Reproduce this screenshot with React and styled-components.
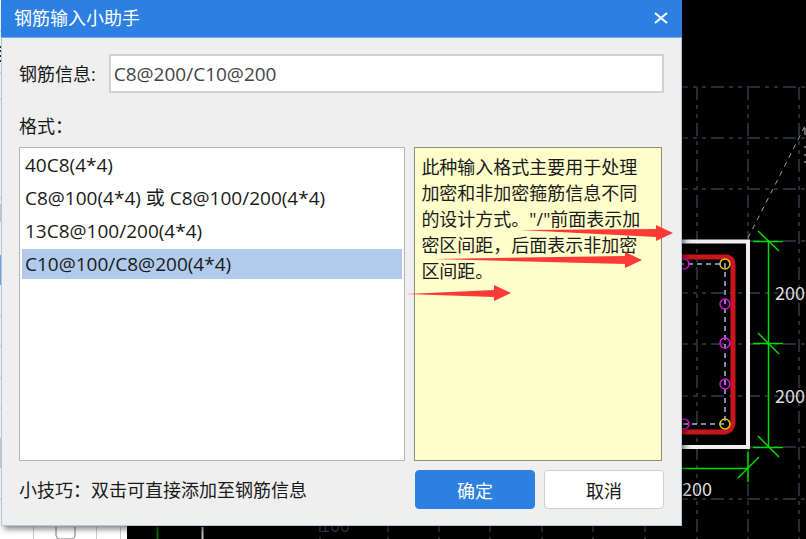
import React, { useState } from 'react';
import styled, { createGlobalStyle } from 'styled-components';

const GlobalStyle = createGlobalStyle`
  * {
    box-sizing: border-box;
  }
  body {
    margin: 0;
    background-color: #000;
    font-family: "Open Sans", "Noto Sans CJK SC", sans-serif;
    font-size: 18px;
    color: #1a1a1a;
  }
  button,
  input {
    font: inherit;
  }
`;

const Workspace = styled.main`
  position: relative;
  min-height: 100vh;
  overflow: hidden;
`;
const Layer = styled.svg`
  position: absolute;
  top: 0;
  left: 0;
  width: 806px;
  height: 539px;
  pointer-events: none;
`;
const Dialog = styled.section`
  position: relative;
  margin: 0 124px 12px 1px;
  background-color: #efefef;
  border: 1px solid #b9c6d8;
  border-top: none;
  box-shadow: 3px 3px 6px rgba(0, 0, 0, 0.5);
`;
const TitleBar = styled.header`
  display: flex;
  align-items: center;
  justify-content: space-between;
  height: 38px;
  margin: 0 -1px;
  padding: 0 12px 2px 13px;
  background-color: #2d7fe1;
  border-bottom: 1px solid #72aef4;
  color: #fff;
`;
const Title = styled.h1`
  margin: 0;
  font-size: 18px;
  font-weight: 400;
  line-height: 24px;
`;
const CloseButton = styled.button`
  display: flex;
  padding: 2px;
  background: none;
  border: none;
  color: #fff;
`;
const Form = styled.form`
  padding: 16px 17px;
`;
const Field = styled.div`
  display: flex;
  align-items: center;
  gap: 13px;
`;
const Label = styled.label`
  line-height: 24px;
`;
const TextInput = styled.input`
  flex: 1;
  min-width: 0;
  height: 39px;
  padding: 0 3px;
  background-color: #fff;
  border: 2px solid #ced1d5;
  color: #444;
  font-size: 19px;
  outline: none;
`;
const FormatTitle = styled.h2`
  margin: 21px 0 9px;
  font-size: 18px;
  font-weight: 400;
  line-height: 24px;
`;
const Columns = styled.div`
  display: grid;
  grid-template-columns: 387fr 248fr;
  gap: 9px;
  margin-right: 2px;
`;
const FormatList = styled.div`
  display: flex;
  flex-direction: column;
  gap: 3px;
  min-height: 314px;
  padding: 2px;
  background-color: #fff;
  border: 1px solid #b4b4b4;
`;
const FormatItem = styled.button`
  height: 30px;
  padding: 0 3px;
  background-color: ${props => (props.$selected ? '#b1cbec' : 'transparent')};
  border: none;
  color: #1a1a1a;
  font-size: 19px;
  text-align: left;
  line-height: 30px;
`;
const Hint = styled.p`
  margin: 0;
  padding: 6px 16px 6px 6px;
  background-color: #ffffcc;
  border: 1px solid #8c8c80;
  line-height: 26px;
`;
const Footer = styled.footer`
  display: flex;
  align-items: center;
  gap: 9px;
  margin-top: 9px;
`;
const Tip = styled.p`
  flex: 1;
  margin: 0;
  line-height: 24px;
`;
const Button = styled.button`
  width: 120px;
  height: 39px;
  background-color: ${props => (props.$primary ? '#2d7fe1' : '#fff')};
  border: 1px solid ${props => (props.$primary ? '#2d7fe1' : '#cfcfcf')};
  border-radius: 4px;
  color: ${props => (props.$primary ? '#fff' : '#1a1a1a')};
`;

const FORMATS = [
  '40C8(4*4)',
  'C8@100(4*4) 或 C8@100/200(4*4)',
  '13C8@100/200(4*4)',
  'C10@100/C8@200(4*4)',
];

const GRID_X = [320, 388, 439, 490, 542, 593, 645, 697, 748, 799];
const GRID_Y = [87, 138, 189, 241, 293, 344, 396, 447, 499];
const BARS = [
  [684, 264],
  [725, 304],
  [725, 343],
  [725, 384],
  [684, 424],
];
const CORNER_BARS = [
  [725, 264],
  [725, 424],
];

const Drawing = () => (
  <Layer viewBox="0 0 806 539" aria-hidden="true">
    <g stroke="#272d37" strokeWidth="2" strokeDasharray="13 5 4 5 4 5">
      {GRID_X.map(x => (
        <path key={x} d={`M${x} 87V539`} />
      ))}
      {GRID_Y.map(y => (
        <path key={y} d={`M639 ${y}H806`} />
      ))}
    </g>
    <path d="M748 238L806 124" stroke="#a0a0a0" strokeDasharray="5 5" />
    <g fill="none">
      <path d="M670 241.500H748V447H670" stroke="#f2eeee" strokeWidth="4" />
      <path
        d="M670 257H727Q733 258 733 265V423Q732 431 725 432H670"
        stroke="#c9161c"
        strokeWidth="5"
      />
      <path
        d="M670 264H725V424H670"
        stroke="#9dbbdc"
        strokeWidth="1.500"
        strokeDasharray="5 4"
      />
      <g stroke="#e808e8" strokeWidth="1.500">
        {BARS.map(([x, y]) => (
          <circle key={`${x}-${y}`} cx={x} cy={y} r="5" />
        ))}
      </g>
      <g stroke="#e8c81c" strokeWidth="1.500">
        {CORNER_BARS.map(([x, y]) => (
          <circle key={`${x}-${y}`} cx={x} cy={y} r="5" />
        ))}
      </g>
      <g stroke="#00dc00" strokeWidth="1.500">
        <path d="M768.500 241V447M753 241.500H783M753 343.500H783M753 447.500H783" />
        <path d="M758 231L779 251M758 333L779 354M758 436L779 457" />
        <path d="M680 468.500H748M748 452V482M738 478L759 457" />
      </g>
    </g>
    <g fill="#dedede" fontFamily="Noto Sans CJK SC, sans-serif" fontSize="18">
      <text x="775" y="300">200</text>
      <text x="775" y="403">200</text>
      <text x="682" y="496">200</text>
      <text x="320" y="532" fill="#343b45">100</text>
    </g>
    <path d="M805 128V135M804 147H806M804 155H806M804 162H806" stroke="#ccc" />
    <path d="M0 0H127V539H0Z" fill="#fff" />
    <path
      d="M0 31H2M0 73H2M0 99H2M0 198H2M0 316H2M0 346H2M0 378H2M0 408H2M0 499H2"
      stroke="#c9ccd4"
    />
    <path d="M0 204H2V222H0ZM0 438H2V468H0Z" fill="#d0d0d4" />
    <path d="M0 255H2V285H0Z" fill="#6fb0fa" />
    <path d="M0 47H1M0 51H1M0 56H1M0 61H1" stroke="#333" strokeWidth="2" />
    <path d="M33.500 527V539M96.500 527V539M120.500 527V539" stroke="#ccc" />
    <path d="M56 527V536L58 539H73L75 536V527" fill="none" stroke="#777" />
    <path d="M157.500 527V539" stroke="#006c00" strokeWidth="2" />
    <path d="M202.500 527V539" stroke="#b8bccb" strokeWidth="2" />
  </Layer>
);

const Arrows = () => (
  <Layer viewBox="0 0 806 539" aria-hidden="true">
    <g fill="#fc3a36">
      <path d="M520 230L656 229V225L673 233L656 241V237Z" />
      <path d="M433 259L625 256V252L642 260L625 268V264Z" />
      <path d="M406 294L494 290V285L511 293L494 301V297Z" />
    </g>
  </Layer>
);

const App = () => {
  const [value, setValue] = useState('C8@200/C10@200');
  const [selected, setSelected] = useState(3);

  return (
    <Workspace>
      <GlobalStyle />
      <Drawing />
      <Dialog role="dialog" aria-labelledby="dialog-title">
        <TitleBar>
          <Title id="dialog-title">钢筋输入小助手</Title>
          <CloseButton type="button" aria-label="关闭">
            <svg width="14" height="14" viewBox="0 0 14 14">
              <path d="M1 2L13 12M13 2L1 12" stroke="currentColor" strokeWidth="2" />
            </svg>
          </CloseButton>
        </TitleBar>
        <Form onSubmit={event => event.preventDefault()}>
          <Field>
            <Label htmlFor="rebar">钢筋信息:</Label>
            <TextInput
              id="rebar"
              type="text"
              value={value}
              onChange={event => setValue(event.target.value)}
            />
          </Field>
          <FormatTitle>格式：</FormatTitle>
          <Columns>
            <FormatList>
              {FORMATS.map((format, index) => (
                <FormatItem
                  key={format}
                  type="button"
                  $selected={index === selected}
                  aria-pressed={index === selected}
                  onClick={() => setSelected(index)}
                  onDoubleClick={() => setValue(format)}
                >
                  {format}
                </FormatItem>
              ))}
            </FormatList>
            <Hint>
              此种输入格式主要用于处理加密和非加密箍筋信息不同的设计方式。"/"前面表示加密区间距，后面表示非加密区间距。
            </Hint>
          </Columns>
          <Footer>
            <Tip>小技巧：双击可直接添加至钢筋信息</Tip>
            <Button type="submit" $primary>
              确定
            </Button>
            <Button type="button">取消</Button>
          </Footer>
        </Form>
      </Dialog>
      <Arrows />
    </Workspace>
  );
};

export default App;
